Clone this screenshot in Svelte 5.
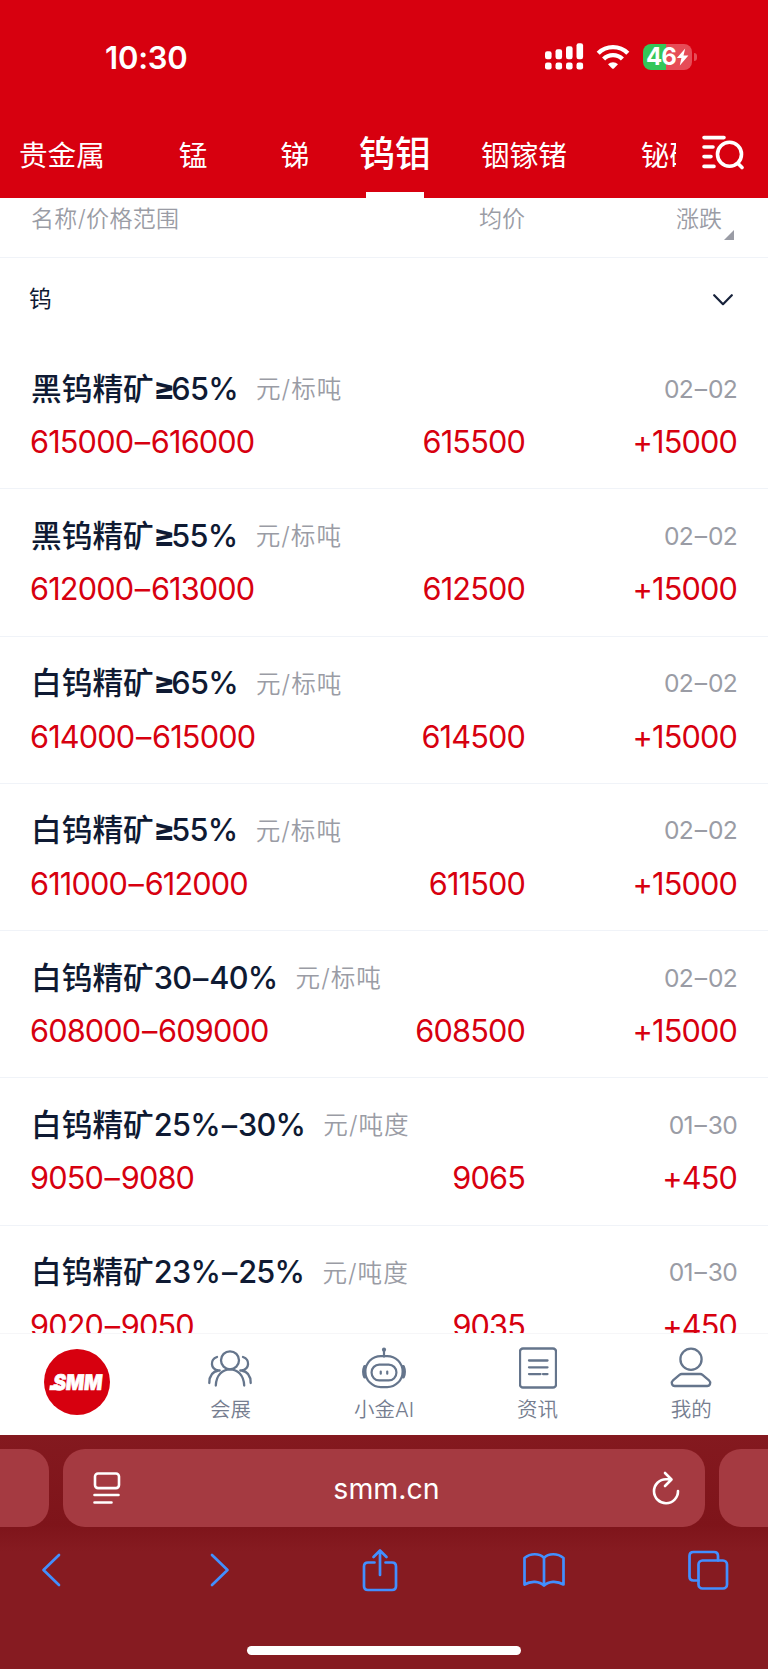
<script lang="ts">
	const tabs = [
		{ label: '贵金属', left: 19 },
		{ label: '锰', left: 74 },
		{ label: '锑', left: 73 },
		{ label: '钨钼', left: 50, active: true },
		{ label: '铟镓锗', left: 50 },
		{ label: '铋硒碲', left: 74 }
	];

	const rows = [
		{ name: '黑钨精矿', spec: '≥65%', unit: '元/标吨', date: '02–02', range: '615000–616000', avg: '615500', change: '+15000' },
		{ name: '黑钨精矿', spec: '≥55%', unit: '元/标吨', date: '02–02', range: '612000–613000', avg: '612500', change: '+15000' },
		{ name: '白钨精矿', spec: '≥65%', unit: '元/标吨', date: '02–02', range: '614000–615000', avg: '614500', change: '+15000' },
		{ name: '白钨精矿', spec: '≥55%', unit: '元/标吨', date: '02–02', range: '611000–612000', avg: '611500', change: '+15000' },
		{ name: '白钨精矿', spec: '30–40%', unit: '元/标吨', date: '02–02', range: '608000–609000', avg: '608500', change: '+15000' },
		{ name: '白钨精矿', spec: '25%–30%', unit: '元/吨度', date: '01–30', range: '9050–9080', avg: '9065', change: '+450' },
		{ name: '白钨精矿', spec: '23%–25%', unit: '元/吨度', date: '01–30', range: '9020–9050', avg: '9035', change: '+450' }
	];

	const signal = [8, 10, 13, 16];
</script>

<!-- gives the en dash a little air, sets ≥ in a heavier cut -->
{#snippet spaced(text: string)}
	{#each text.split(/([–≥])/) as part}{#if part === '–'}<span class="dash">–</span>{:else if part === '≥'}<span class="gte">≥</span>{:else}{part}{/if}{/each}
{/snippet}

<div class="screen">
	<header>
		<div class="status">
			<span class="time">10:30</span>
			<svg class="signal" width="39" height="27" viewBox="0 0 39 27">
				{#each signal as height, i}
					<rect x={i * 10.5} y={16.3 - height} width="6.6" {height} rx="2.2" />
					<rect x={i * 10.5} y="19.6" width="6.6" height="6.8" rx="2.2" />
				{/each}
			</svg>
			<svg class="wifi" width="34" height="26" viewBox="0 0 34 26">
				<path d="M2.2 9.2a21 21 0 0 1 29.6 0" />
				<path d="M7.6 15a13.3 13.3 0 0 1 18.8 0" />
				<path class="dot" d="M12 20.2a7.3 7.3 0 0 1 10 0l-4.1 4.2q-.9.8-1.8 0z" />
			</svg>
			<div class="battery">
				<span>46</span>
				<svg width="13" height="18" viewBox="0 0 13 18"><path d="M9.2.5.8 10h4.6L3.8 17.5 12.4 7.6H7.5z" /></svg>
			</div>
			<i class="nub"></i>
		</div>
		<div class="nav">
			<nav>
				{#each tabs as tab}
					<a class:active={tab.active} style:margin-left={tab.left + 'px'}>{tab.label}</a>
				{/each}
			</nav>
			<svg class="search" width="42" height="36" viewBox="0 0 42 36">
				<path d="M2 2.6h20M2 12h9M2 21.6h7M2 31.4h10" />
				<circle cx="27.5" cy="19.2" r="12" />
				<path d="m36 28.6 4 4" />
			</svg>
		</div>
	</header>

	<main>
		<div class="columns">
			<span>名称/价格范围</span>
			<span class="avg">均价</span>
			<span class="change">涨跌<i></i></span>
		</div>
		<div class="group">
			<span>钨</span>
			<svg width="20" height="12" viewBox="0 0 20 12"><path d="m1.2 1.2 8.8 9 8.8-9" /></svg>
		</div>
		{#each rows as row}
			<section>
				<div class="title">
					<h2>{row.name}<b>{@render spaced(row.spec)}</b></h2>
					<span class="unit">{row.unit}</span>
					<time>{@render spaced(row.date)}</time>
				</div>
				<div class="price">
					<span>{@render spaced(row.range)}</span>
					<span class="avg">{row.avg}</span>
					<span class="change">{row.change}</span>
				</div>
			</section>
		{/each}
	</main>

	<footer>
		<div class="item logo">
			<svg width="66" height="66" viewBox="0 0 66 66">
				<circle cx="33" cy="33" r="33" />
				<path d="M5.8 36.3h10v4.9H5.2z" />
				<text transform="skewX(-6)" x="13" y="41.2" textLength="49" lengthAdjust="spacingAndGlyphs">SMM</text>
			</svg>
		</div>
		<div class="item">
			<svg width="44" height="42" viewBox="0 0 44 42">
				<circle cx="22" cy="13.3" r="9" />
				<path d="M7.8 38.5C8.2 28 14.5 22.3 22 22.3s13.8 5.7 14.2 16.2" />
				<path d="M9 10c-7 2.5-7 12 1.5 13.5h1.2M10.5 23.5C4 24.5 1.3 29 1.3 36M35 10c7 2.5 7 12-1.5 13.5h-1.2M33.5 23.5c6.5 1 9.2 5.5 9.2 12.5" />
			</svg>
			<span>会展</span>
		</div>
		<div class="item">
			<svg width="46" height="44" viewBox="0 0 46 44">
				<path d="M23 4v6" />
				<circle class="fill" cx="23" cy="2.8" r="2.2" />
				<rect x="3.5" y="9.5" width="39" height="32.5" rx="16.2" />
				<rect x="10" y="18.5" width="26" height="16.5" rx="8" />
				<path class="ear" d="M2.8 20.5c-1.4 3.4-1.4 7.4 0 10.8M43.2 20.5c1.4 3.4 1.4 7.4 0 10.8" />
				<path d="M19.6 25.7v2.2M26.4 25.7v2.2" />
			</svg>
			<span>小金AI</span>
		</div>
		<div class="item">
			<svg width="38" height="42" viewBox="0 0 38 42">
				<rect x="1" y="1.5" width="36" height="39" rx="3" />
				<path d="M10 13.5h18.5M10 20.3h18.5M10 27.1h11.5M24 27.1h4.5" />
			</svg>
			<span>资讯</span>
		</div>
		<div class="item">
			<svg width="42" height="42" viewBox="0 0 42 42">
				<circle cx="21" cy="12.3" r="10.6" />
				<path d="M11.8 27h18.4q1.3 0 2.3.8l6.5 5.6c2.2 2 1.200 5.600-1.800 5.600H4.800c-3 0-4-3.600-1.800-5.600l6.500-5.600q1-.8 2.300-.8z" />
			</svg>
			<span>我的</span>
		</div>
	</footer>

	<div class="browser">
		<div class="address">
			<i></i>
			<div class="pill">
				<svg width="28" height="32" viewBox="0 0 28 32">
					<rect x="2" y="1.5" width="24" height="14.6" rx="3" />
					<path d="M1.5 23h24M1.5 30.5h17" />
				</svg>
				<span>smm.cn</span>
				<svg width="28" height="34" viewBox="0 0 28 34">
					<path d="M19 8.2h-5A12 12 0 1 0 26 20M13 2l6.5 6.5L13 15" />
				</svg>
			</div>
			<i></i>
		</div>
		<div class="tools">
			<span><svg width="20" height="34" viewBox="0 0 20 34"><path d="M18 2 2.5 17 18 32" /></svg></span>
			<span class="forward"><svg width="20" height="34" viewBox="0 0 20 34"><path d="m2 2 15.5 15L2 32" /></svg></span>
			<span>
				<svg width="36" height="44" viewBox="0 0 36 44">
					<path d="M12.5 14.5H6q-4 0-4 4V38q0 4 4 4h24q4 0 4-4V18.5q0-4-4-4h-6.5M18 27V2.5M11.5 9 18 2.5 24.5 9" />
				</svg>
			</span>
			<span>
				<svg width="44" height="36" viewBox="0 0 44 36">
					<path d="M22 33.5c-4.500-4.500-13-5-19.500-1V6c6-5 15-5 19.500 0 4.500-5 13.500-5 19.500 0v26.500c-6.500-4-15-3.500-19.500 1zM22 6v27" />
				</svg>
			</span>
			<span>
				<svg width="42" height="40" viewBox="0 0 42 40">
					<rect x="11.5" y="10.5" width="28.5" height="28" rx="4" />
					<path d="M11.5 30.5H6.5q-4 0-4-4V6q0-4 4-4h20.5q4 0 4 4v4.5" />
				</svg>
			</span>
		</div>
		<div class="home"></div>
	</div>
</div>

<style>
	:global(body) {
		margin: 0;
		background: #fff;
	}
	.screen {
		width: 768px;
		height: 1669px;
		overflow: hidden;
		display: flex;
		flex-direction: column;
		font-family: Inter, 'Noto Sans CJK SC', sans-serif;
		color: #0f1a33;
	}
	svg {
		display: block;
		flex: none;
		fill: none;
		stroke-linecap: round;
		stroke-linejoin: round;
	}
	header {
		flex: none;
		height: 198px;
		background: #d7000f;
		color: #fff;
	}
	.status {
		height: 113px;
		padding-left: 105px;
		display: flex;
		align-items: center;
		box-sizing: border-box;
	}
	.time {
		width: 440px;
		font-size: 31px;
		font-weight: 600;
		letter-spacing: -0.2px;
		margin-top: 1px;
	}
	.signal {
		fill: #fff;
	}
	.wifi {
		margin-left: 12px;
		stroke: #fff;
		stroke-width: 4.4;
		stroke-linecap: butt;
	}
	.wifi .dot {
		fill: #fff;
		stroke: none;
	}
	.battery {
		width: 49px;
		height: 26px;
		margin-left: 13px;
		border-radius: 8px;
		background: linear-gradient(90deg, #34c759 46%, #e64c57 46%);
		display: flex;
		align-items: center;
		justify-content: center;
		font-size: 24px;
		font-weight: 700;
		letter-spacing: -0.8px;
	}
	.battery svg {
		fill: #fff;
	}
	.nub {
		width: 3px;
		height: 8px;
		margin-left: 2px;
		border-radius: 0 4px 4px 0;
		background: #e64c57;
	}
	.nav {
		height: 85px;
		display: flex;
	}
	nav {
		width: 676px;
		overflow: hidden;
		display: flex;
		white-space: nowrap;
	}
	nav a {
		position: relative;
		flex: none;
		font-size: 28.6px;
		line-height: 86px;
	}
	nav .active {
		font-size: 36px;
		font-weight: 500;
		line-height: 82px;
	}
	nav .active::after {
		content: '';
		position: absolute;
		left: 50%;
		bottom: 0;
		width: 58px;
		height: 6px;
		margin-left: -29px;
		background: #fff;
	}
	.search {
		margin: 22px 0 0 26px;
		stroke: #fff;
		stroke-width: 3.6;
	}
	main {
		height: 1135px;
		overflow: hidden;
	}
	.columns {
		height: 59.5px;
		padding: 0 31px;
		border-bottom: 1px solid #f0f3f8;
		box-sizing: border-box;
		display: flex;
		font-size: 23px;
		font-weight: 350;
		line-height: 42px;
		color: #9a9ca5;
	}
	.columns > span:first-child,
	.price > span:first-child {
		width: 320px;
	}
	.columns > span:first-child {
		letter-spacing: 0.35px;
	}
	.avg {
		width: 174px;
		text-align: right;
	}
	.change {
		flex: 1;
		text-align: right;
	}
	.columns .change {
		position: relative;
		padding-right: 15px;
	}
	.columns i {
		position: absolute;
		right: 3px;
		top: 32px;
		border-left: 10px solid transparent;
		border-bottom: 10px solid #9a9ca5;
	}
	.group {
		height: 84.5px;
		padding: 0 35px 0 29px;
		display: flex;
		align-items: center;
		justify-content: space-between;
		font-size: 22.5px;
	}
	.group span {
		margin-top: -5px;
	}
	.group svg {
		stroke: #17223b;
		stroke-width: 2.2;
	}
	section {
		height: 147.3px;
		padding: 22px 31px 0;
		border-bottom: 1px solid #f0f3f8;
		box-sizing: border-box;
	}
	.title {
		height: 50px;
		display: flex;
		align-items: center;
	}
	h2 {
		margin: 0;
		font-size: 30.7px;
		font-weight: 500;
		line-height: 50px;
		margin-top: -1px;
	}
	h2 b {
		font-weight: 500;
		letter-spacing: -0.7px;
	}
	.dash {
		margin: 0 1.6px;
	}
	.gte {
		font-weight: 800;
		letter-spacing: -3.5px;
	}
	.unit {
		margin: -4px 0 0 18px;
		font-size: 24.6px;
		font-weight: 350;
		letter-spacing: 1px;
		color: #9a9ca5;
	}
	time {
		margin: -1px 0 0 auto;
		font-size: 24.6px;
		letter-spacing: -0.7px;
		color: #9a9ca5;
	}
	.price {
		height: 56px;
		display: flex;
		font-size: 30.7px;
		line-height: 55px;
		letter-spacing: -0.85px;
		color: #d7000f;
	}
	.price > span:first-child {
		margin-left: -1px;
		width: 321px;
	}
	footer {
		flex: none;
		height: 102px;
		border-top: 1px solid #f6f6f8;
		box-sizing: border-box;
		display: flex;
		color: #757d8f;
	}
	.item {
		flex: 1;
		padding-top: 13px;
		display: flex;
		flex-direction: column;
		align-items: center;
	}
	.item svg {
		height: 42px;
		stroke: #65758c;
		stroke-width: 2.3;
	}
	.item .fill {
		fill: #65758c;
		stroke: none;
	}
	.item .ear {
		stroke-width: 3.4;
	}
	.item span {
		margin-top: 6px;
		font-size: 20.5px;
		line-height: 30px;
		font-weight: 350;
	}
	.logo svg {
		height: 66px;
		margin-top: 2px;
		fill: #d7000f;
		stroke: none;
	}
	.logo text,
	.logo path {
		fill: #fff;
	}
	.logo text {
		font-size: 21.5px;
		font-weight: 900;
		stroke: #fff;
		stroke-width: 0.7;
	}
	.browser {
		flex: none;
		height: 234px;
		background: linear-gradient(#84191f, #7e141a 38%, #861b21 50%);
	}
	.address {
		padding-top: 14px;
		display: flex;
		justify-content: space-between;
	}
	.address i {
		width: 49px;
		background: #a53a41;
		border-radius: 0 22px 22px 0;
	}
	.address i:last-child {
		border-radius: 22px 0 0 22px;
	}
	.pill {
		width: 642px;
		height: 78px;
		padding: 0 25px 0 30px;
		border-radius: 22px;
		box-sizing: border-box;
		background: #a53a41;
		display: flex;
		align-items: center;
		justify-content: space-between;
		color: #fff;
		font-size: 28.5px;
	}
	.pill svg {
		stroke: #fff;
		stroke-width: 2.6;
	}
	.tools {
		height: 86px;
		padding: 0 30px 0 21px;
		display: flex;
		align-items: center;
		justify-content: space-between;
	}
	.tools span {
		width: 60px;
		display: flex;
		justify-content: center;
		box-sizing: border-box;
	}
	.tools .forward {
		padding-left: 9px;
	}
	.tools svg {
		stroke: #428fff;
		stroke-width: 2.7;
	}
	.home {
		width: 274px;
		height: 9px;
		margin: 33px auto 0;
		border-radius: 5px;
		background: #fff;
	}
</style>
